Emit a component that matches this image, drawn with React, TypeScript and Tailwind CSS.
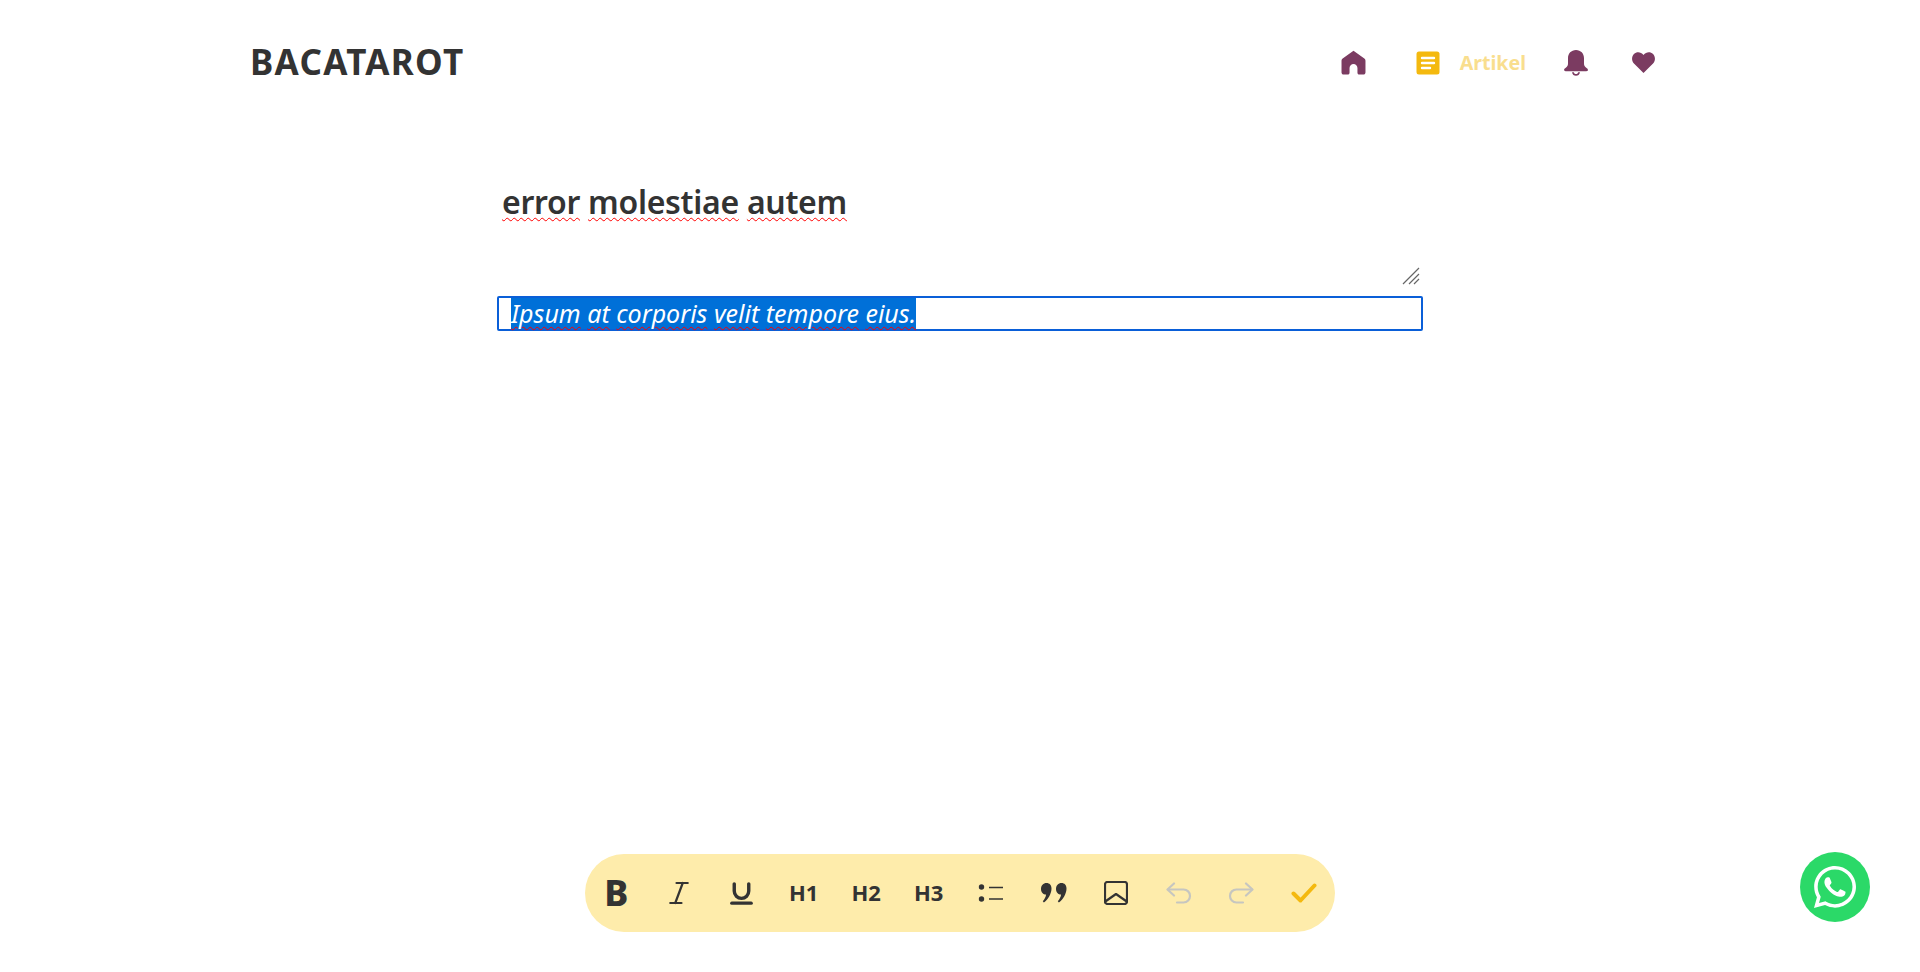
import React from 'react';
import { FaWhatsapp } from 'react-icons/fa';
import { Italic, Underline } from 'lucide-react';

const bodyWords = ['Ipsum', 'at', 'corporis', 'velit', 'tempore', 'eius.'];
const titleWords = ['error', 'molestiae', 'autem'];

const HomeIcon = () => (
  <svg viewBox="0 0 24 24" className="w-[25px] h-[25px]" fill="#7b3b61">
    <path d="M12 .6 1.6 8.2C.8 8.8.5 9.5.5 10.4v11.2c0 1.2.9 2 2 2h4c1 0 1.7-.8 1.7-1.8v-4.6c0-2.1 1.700-3.800 3.800-3.800s3.800 1.700 3.800 3.800v4.600c0 1 .7 1.800 1.700 1.800h4c1.100 0 2-.8 2-2V10.400c0-.9-.3-1.600-1.100-2.200z" />
  </svg>
);

const DocIcon = () => (
  <svg viewBox="0 0 24 24" className="w-[24px] h-[24px]">
    <rect x="0.500" y="0.500" width="23" height="23" rx="2.500" fill="#f4b90f" />
    <path d="M6 7h12M6 12h12M6 17h8" stroke="#fff" strokeWidth="2.400" strokeLinecap="round" />
  </svg>
);

const BellIcon = () => (
  <svg viewBox="0 0 24 26" className="w-[24px] h-[26px]" fill="#7b3b61">
    <path d="M12 0C7.200 0 4 3.600 4 8.200v5.300c0 2-.8 3.300-2.500 4.500C.3 18.900.1 19.400.1 20c0 .8.700 1.200 1.500 1.200h20.800c.8 0 1.500-.4 1.500-1.200 0-.6-.2-1.100-1.400-2-1.700-1.200-2.500-2.500-2.500-4.500V8.200C20 3.600 16.800 0 12 0z" />
    <path d="M8 22.200c.4 2.300 2 3.600 4 3.600s3.600-1.300 4-3.600h-1.800c-.4 1.200-1.200 1.900-2.200 1.900s-1.800-.7-2.200-1.900z" />
  </svg>
);

const HeartIcon = () => (
  <svg viewBox="0 0 24 22" className="w-[23px] h-[21px]" fill="#7b3b61">
    <path d="M12 22 2 12C-.7 9.200-.6 4.600 2 2 4.800-.7 9.200-.6 12 3.200 14.800-.6 19.200-.7 22 2c2.600 2.600 2.700 7.200 0 10z" />
  </svg>
);

const ListIcon = () => (
  <svg viewBox="0 0 26 20" className="w-[26px] h-[20px]">
    <circle cx="3.500" cy="4" r="2.700" fill="#333" />
    <circle cx="3.500" cy="16" r="2.700" fill="#333" />
    <path d="M11 4.500h14M11 16h14" stroke="#333" strokeWidth="1.500" />
  </svg>
);

const QuoteIcon = () => (
  <svg viewBox="0 0 26 20" className="w-[26px] h-[20px]" fill="#333">
    <path d="M5.500 0C8.500 0 10.500 2.200 10.500 5.400c0 5-3.200 10.800-7.600 14.100L1.800 18.300c1.800-2 2.900-4.200 3.300-6.800C2.200 11.500 0 9.100 0 5.900 0 2.500 2.300 0 5.500 0z" />
    <path d="M20.500 0c3 0 5 2.200 5 5.400 0 5-3.200 10.800-7.600 14.100l-1.100-1.200c1.800-2 2.900-4.200 3.300-6.800-2.900 0-5.100-2.400-5.100-5.600C15 2.500 17.300 0 20.500 0z" />
  </svg>
);

const ImageIcon = () => (
  <svg viewBox="0 0 24 24" className="w-[24px] h-[24px]" fill="none" stroke="#333" strokeWidth="2.200" strokeLinejoin="round">
    <rect x="1" y="1" width="22" height="22" rx="2.500" />
    <path d="m2 20 10-7 10 7" strokeLinecap="round" />
  </svg>
);

const UndoIcon = ({ flip }: { flip?: boolean }) => (
  <svg viewBox="0 0 26 22" className={`w-[26px] h-[22px] ${flip ? '-scale-x-100' : ''}`} fill="none" stroke="#c6c6c0" strokeWidth="2.200" strokeLinecap="round" strokeLinejoin="round">
    <path d="M8 1.500 1.500 7.500 8 13.500" />
    <path d="M2 7.500h15.500c3.800 0 6.500 2.800 6.500 6.400s-2.700 6.600-6.500 6.600H11" />
  </svg>
);

const CheckIcon = () => (
  <svg viewBox="0 0 26 20" className="w-[26px] h-[20px]" fill="none" stroke="#f4b90f" strokeWidth="4" strokeLinecap="round" strokeLinejoin="round">
    <path d="m2.500 10.500 7 7L23.500 2.500" />
  </svg>
);

const Heading = ({ label }: { label: string }) => (
  <span className="pb-[3px] text-[22px] font-bold leading-none text-[#333]">{label}</span>
);

const toolbarItems = [
  <span key="b" className="text-[36px] font-extrabold leading-none text-[#333]">B</span>,
  <Italic key="i" size={30} color="#333" strokeWidth={2.200} absoluteStrokeWidth />,
  <Underline key="u" size={29} color="#333" strokeWidth={3.400} absoluteStrokeWidth />,
  <Heading key="h1" label="H1" />,
  <Heading key="h2" label="H2" />,
  <Heading key="h3" label="H3" />,
  <ListIcon key="list" />,
  <QuoteIcon key="quote" />,
  <ImageIcon key="image" />,
  <UndoIcon key="undo" />,
  <UndoIcon key="redo" flip />,
  <CheckIcon key="check" />,
];

export default function App() {
  return (
    <div className="relative h-[972px] overflow-hidden bg-white font-['Noto_Sans',sans-serif] text-[#333]">
      <header className="mx-auto flex w-[1420px] items-center justify-between pt-[37px]">
        <div className="text-[35px] font-bold leading-[50px] tracking-[1.3px]">BACATAROT</div>
        <nav className="mt-[2px] flex items-center">
          <HomeIcon />
          <div className="ml-[50px] flex items-center gap-[20px]">
            <DocIcon />
            <span className="text-[19.6px] font-bold text-[#f9de8e]">Artikel</span>
          </div>
          <div className="ml-[38px]"><BellIcon /></div>
          <div className="ml-[44px] mr-[15px]"><HeartIcon /></div>
        </nav>
      </header>

      <main className="mx-auto mt-[91px] w-[926px]">
        <div className="relative h-[118px] pl-[5px]">
          <h1 className="text-[32px] font-semibold leading-[48px] tracking-[-0.3px]">
            {titleWords.map((word, i) => (
              <React.Fragment key={word}>
                <span className="underline decoration-wavy decoration-[#ff0000] decoration-1 underline-offset-[3px]">{word}</span>
                {i < titleWords.length - 1 ? ' ' : ''}
              </React.Fragment>
            ))}
          </h1>
          <svg viewBox="0 0 18 18" className="absolute right-[3px] top-[89px] h-[18px] w-[18px]" stroke="#666" strokeWidth="1.200">
            <path d="M1 17 17 1M7 17 17 7M12 17l5-5" />
          </svg>
        </div>
        <div className="flex h-[35px] items-center rounded-[2px] border-2 border-[#0a5fd8] pl-[12px]">
          <p className="bg-[#0070d8] text-[25px] italic leading-[31px] text-white">
            {bodyWords.map((word, i) => (
              <React.Fragment key={word}>
                <span className="underline decoration-wavy decoration-[#ff0000] decoration-1 underline-offset-[3px]">{word}</span>
                {i < bodyWords.length - 1 ? ' ' : ''}
              </React.Fragment>
            ))}
          </p>
        </div>
      </main>

      <div className="absolute bottom-[40px] left-[585px] grid h-[78px] w-[750px] grid-cols-12 items-center rounded-[39px] bg-[#feecab]">
        {toolbarItems.map((item) => (
          <div key={item.key} className="flex items-center justify-center">{item}</div>
        ))}
      </div>

      <div className="absolute left-[1800px] top-[852px] flex h-[70px] w-[70px] items-center justify-center rounded-full bg-[#2bd968]">
        <FaWhatsapp size={48} color="#fff" />
      </div>
    </div>
  );
}
